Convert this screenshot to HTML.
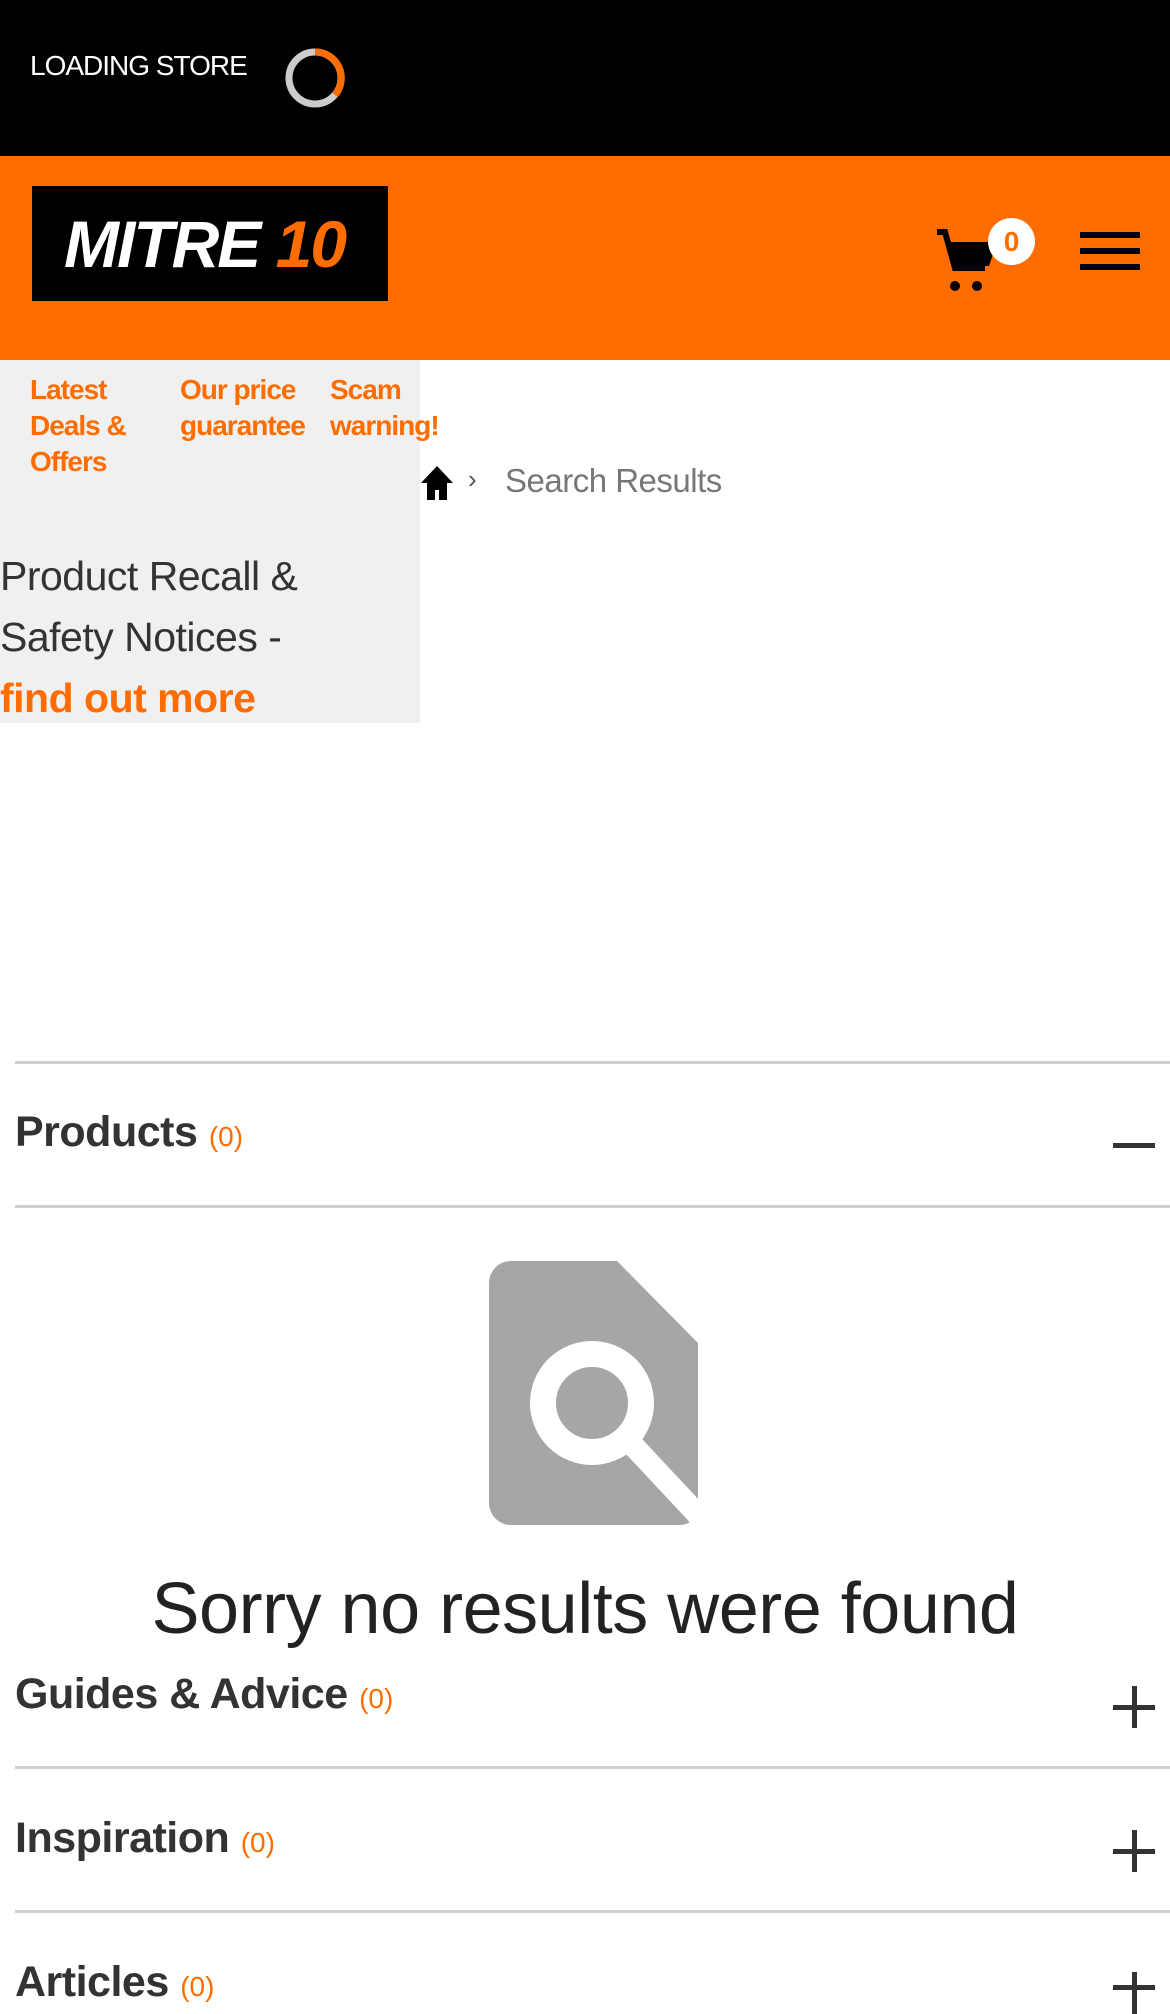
<!DOCTYPE html>
<html><head><meta charset="utf-8"><style>
*{margin:0;padding:0;box-sizing:border-box}
body{width:1170px;height:1992px;position:relative;overflow:hidden;background:#fff;font-family:"Liberation Sans",sans-serif;color:#333}
.a{position:absolute;white-space:nowrap}
.or{color:#ff6c00}
.line{position:absolute;left:15px;right:0;height:3px;background:#d0d0d0}
.h{position:absolute;left:15px;font-weight:bold;font-size:43px;color:#333;letter-spacing:-0.5px}
.h span{font-size:28px;font-weight:normal;color:#ff6c00;letter-spacing:0}
.pm{position:absolute;left:1113px;width:42px;height:5px;background:#333}
.pv{position:absolute;left:1132px;width:5px;height:42px;background:#333}
</style></head><body>
<div class="a" style="left:0;top:0;width:1170px;height:156px;background:#000"></div>
<div class="a" style="left:30px;top:50px;color:#fff;font-size:28px;letter-spacing:-1px">LOADING STORE</div>
<svg class="a" style="left:283px;top:46px" width="64" height="64" viewBox="0 0 64 64"><circle cx="32" cy="32" r="26" fill="none" stroke="#ccc" stroke-width="7"/><path d="M32 6 A26 26 0 0 1 52 49" fill="none" stroke="#ff6c00" stroke-width="7"/></svg>
<div class="a" style="left:0;top:156px;width:1170px;height:204px;background:#ff6c00"></div>
<div class="a" style="left:32px;top:186px;width:356px;height:115px;background:#000"></div>
<div class="a" style="left:64px;top:206px;color:#fff;font-size:66px;font-weight:bold;font-style:italic;letter-spacing:-2px">MITRE <span style="color:#ff6c00">10</span></div>
<svg class="a" style="left:935px;top:228px" width="65" height="64" viewBox="0 0 65 64"><path d="M2 4h8l10 36h30" fill="none" stroke="#000" stroke-width="6"/><path d="M12 14h50l-8 24H20z" fill="#000"/><circle cx="20" cy="58" r="5" fill="#000"/><circle cx="42" cy="58" r="5" fill="#000"/></svg>
<div class="a" style="left:988px;top:218px;width:47px;height:47px;border-radius:50%;background:#fff;color:#ff6c00;font-weight:bold;font-size:28px;text-align:center;line-height:47px">0</div>
<div class="a" style="left:1080px;top:232px;width:60px;height:6px;background:#000"></div>
<div class="a" style="left:1080px;top:248px;width:60px;height:6px;background:#000"></div>
<div class="a" style="left:1080px;top:264px;width:60px;height:6px;background:#000"></div>
<div class="a" style="left:0;top:360px;width:420px;height:363px;background:#f0f0f0"></div>
<div class="a or" style="left:30px;top:372px;font-size:28px;font-weight:bold;line-height:36px;letter-spacing:-1px">Latest<br>Deals &amp;<br>Offers</div>
<div class="a or" style="left:180px;top:372px;font-size:28px;font-weight:bold;line-height:36px;letter-spacing:-1px">Our price<br>guarantee</div>
<div class="a or" style="left:330px;top:372px;font-size:28px;font-weight:bold;line-height:36px;letter-spacing:-1px">Scam<br>warning!</div>
<svg class="a" style="left:420px;top:465px" width="34" height="36" viewBox="0 0 34 36"><path d="M17 1L1 18h6v17h8v-10h4v10h8V18h6z" fill="#000"/></svg>
<div class="a" style="left:468px;top:464px;font-size:26px;color:#555">›</div>
<div class="a" style="left:505px;top:462px;font-size:33px;color:#777;letter-spacing:-0.5px">Search Results</div>
<div class="a" style="left:0;top:546px;font-size:41px;line-height:61px;color:#333;letter-spacing:-0.5px">Product Recall &amp;<br>Safety Notices -<br><span class="or" style="font-weight:bold">find out more</span></div>
<div class="line" style="top:1061px"></div>
<div class="h" style="top:1108px">Products <span>(0)</span></div>
<div class="pm" style="top:1143px"></div>
<div class="line" style="top:1205px"></div>
<svg class="a" style="left:487px;top:1261px" width="212" height="264" viewBox="0 0 212 264"><path d="M24 0H130L211 82V246a18 18 0 0 1-18 18H24a22 22 0 0 1-22-22V22A22 22 0 0 1 24 0z" fill="#a6a6a6"/><circle cx="105" cy="142" r="49" fill="none" stroke="#fff" stroke-width="26"/><path d="M140 178L212 255" stroke="#fff" stroke-width="22"/></svg>
<div class="a" style="left:0;width:1170px;text-align:center;top:1568px;font-size:72px;color:#222;letter-spacing:-0.5px">Sorry no results were found</div>
<div class="h" style="top:1670px">Guides &amp; Advice <span>(0)</span></div>
<div class="pm" style="top:1705px"></div><div class="pv" style="top:1686px"></div>
<div class="line" style="top:1766px"></div>
<div class="h" style="top:1814px">Inspiration <span>(0)</span></div>
<div class="pm" style="top:1849px"></div><div class="pv" style="top:1830px"></div>
<div class="line" style="top:1910px"></div>
<div class="h" style="top:1958px">Articles <span>(0)</span></div>
<div class="pm" style="top:1985px"></div><div class="pv" style="top:1972px"></div>
</body></html>
